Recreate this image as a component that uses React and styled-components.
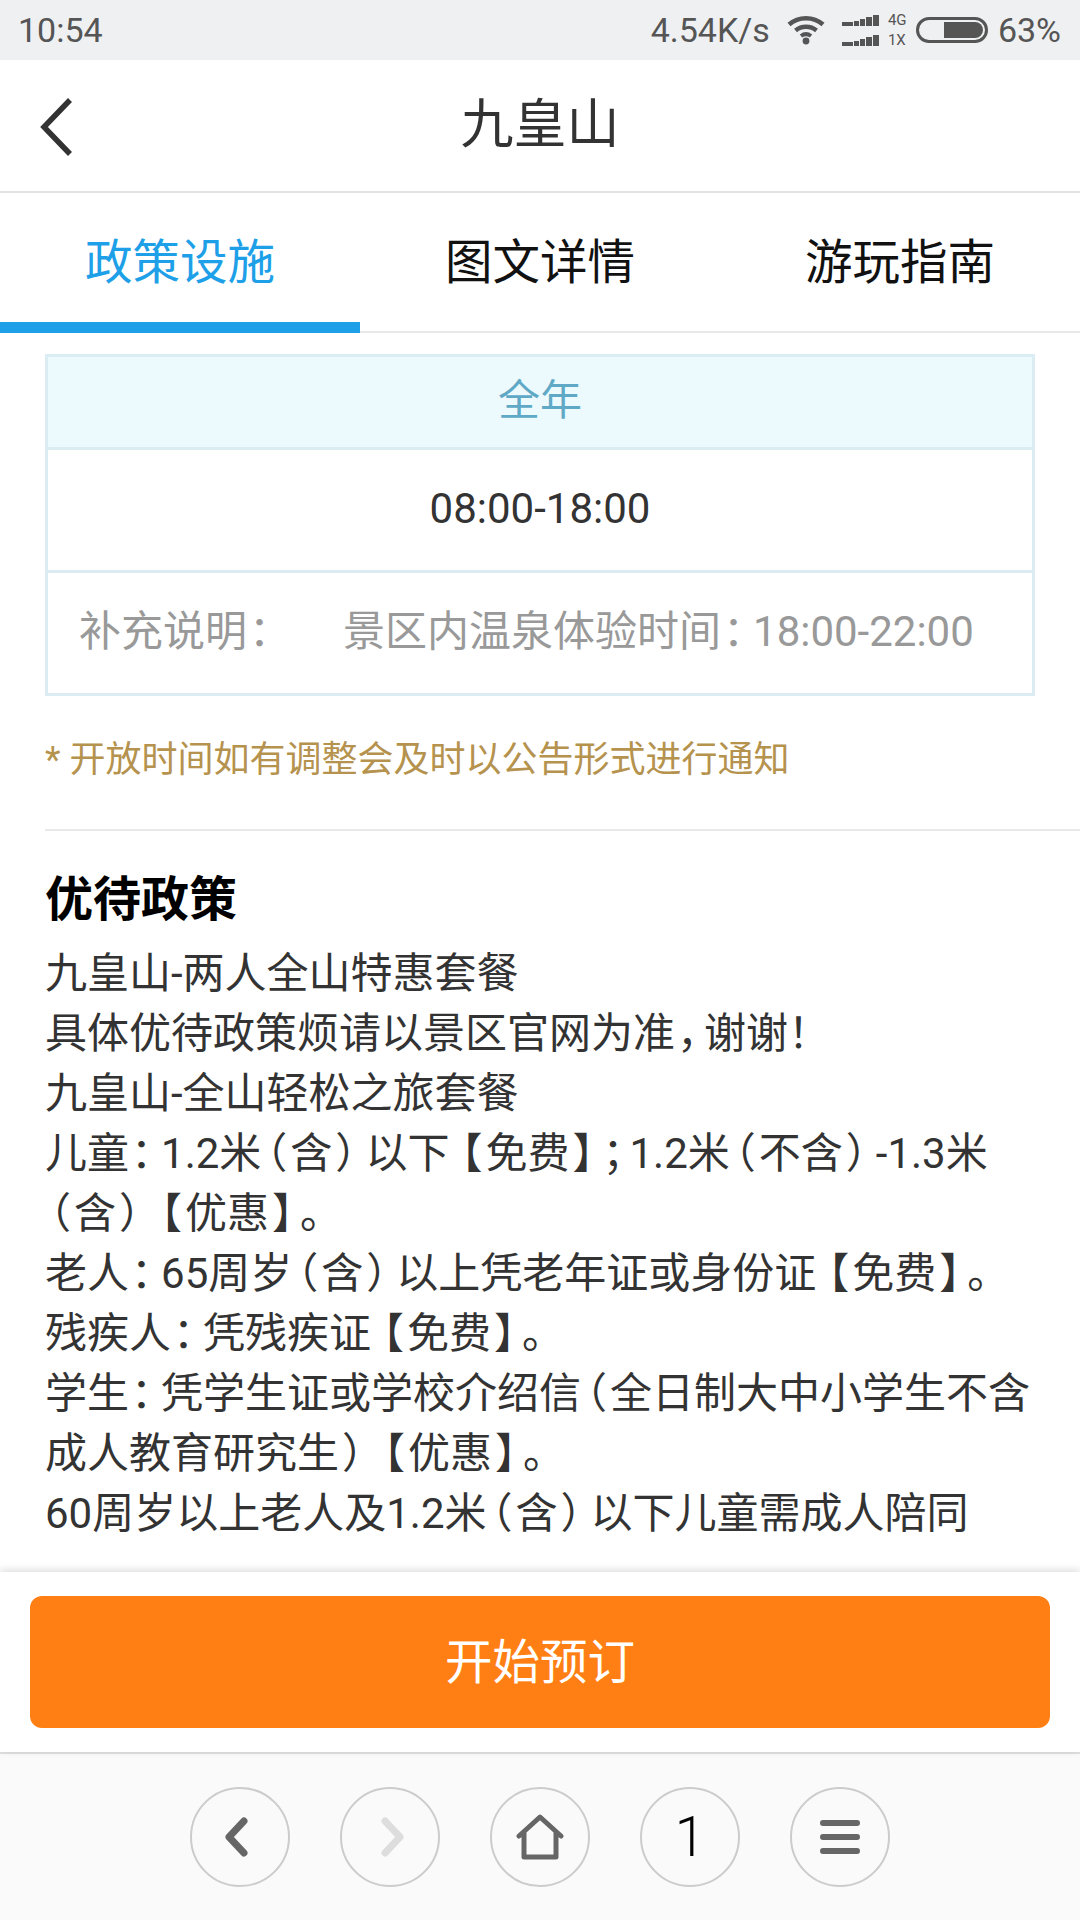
import styled, { createGlobalStyle } from 'styled-components';

const GlobalStyle = createGlobalStyle`
   html, body {
      margin: 0;
      padding: 0;
      background: #fff;
   }
   body {
      font-family: Roboto, "Noto Sans CJK SC", sans-serif;
   }
`;

const policyLines = [
   '九皇山-两人全山特惠套餐',
   '具体优待政策烦请以景区官网为准，谢谢！',
   '九皇山-全山轻松之旅套餐',
   '儿童：1.2米（含）以下【免费】；1.2米（不含）-1.3米',
   '（含）【优惠】。',
   '老人：65周岁（含）以上凭老年证或身份证【免费】。',
   '残疾人：凭残疾证【免费】。',
   '学生：凭学生证或学校介绍信（全日制大中小学生不含',
   '成人教育研究生）【优惠】。',
   '60周岁以上老人及1.2米（含）以下儿童需成人陪同',
];

const tabs = ['政策设施', '图文详情', '游玩指南'];

// the phone font sets its punctuation narrower and centred
const punctPadding = {
   '（': '0 3px 0 5px',
   '）': '0 9px 0 3px',
   '【': '0 3px 0 12px',
   '】': '0 1px 0 3px',
   '：': '0 9px 0 2px',
   '；': '0 6px 0 8px',
   '，': '0 6px 0 2px',
   '！': '0',
   '。': '0 0 0 6px',
};

const withPunct = (text) =>
   text.split(/([（）【】：；，！。])/).map((part, i) =>
      punctPadding[part] ? (
         <Punct key={i} $padding={punctPadding[part]}>
            {part}
         </Punct>
      ) : (
         part
      )
   );

const App = () => {
   return (
      <Page>
         <GlobalStyle />
         <StatusBar>
            <StatusText>10:54</StatusText>
            <StatusRight>
               <Speed>4.54K/s</Speed>
               <svg width='38' height='30' viewBox='0 0 38 30'>
                  <path d='M2 9.5C11.5 1 26.5 1 36 9.5' fill='none' stroke='#555' strokeWidth='4.5' />
                  <path d='M8.5 15.5C14.5 10.5 23.5 10.5 29.5 15.5' fill='none' stroke='#555' strokeWidth='4.5' />
                  <path d='M14 21C17 18.7 21 18.7 24 21' fill='none' stroke='#555' strokeWidth='4' />
                  <circle cx='19' cy='26' r='3.4' fill='#555' />
               </svg>
               <SignalStack>
                  <SignalRow>
                     <SignalBars />
                     <NetLabel>4G</NetLabel>
                  </SignalRow>
                  <SignalRow>
                     <SignalBars />
                     <NetLabel>1X</NetLabel>
                  </SignalRow>
               </SignalStack>
               <Battery>
                  <BatteryLevel />
               </Battery>
               <StatusText>63%</StatusText>
            </StatusRight>
         </StatusBar>

         <Header>
            <BackIcon width='36' height='60' viewBox='0 0 36 60'>
               <path d='M32 3L6 30L32 57' fill='none' stroke='#333' strokeWidth='5.5' />
            </BackIcon>
            <Title>九皇山</Title>
         </Header>

         <Tabs>
            {tabs.map((tab, i) => (
               <Tab key={tab} $active={i === 0}>
                  {tab}
               </Tab>
            ))}
         </Tabs>

         <Content>
            <HoursTable>
               <SeasonRow>全年</SeasonRow>
               <TimeRow>08:00-18:00</TimeRow>
               <NoteRow>
                  <NoteLabel>{withPunct('补充说明：')}</NoteLabel>
                  <span>{withPunct('景区内温泉体验时间：18:00-22:00')}</span>
               </NoteRow>
            </HoursTable>
            <Notice>* 开放时间如有调整会及时以公告形式进行通知</Notice>
            <Divider />
            <SectionTitle>优待政策</SectionTitle>
            {policyLines.map((line) => (
               <PolicyLine key={line}>{withPunct(line)}</PolicyLine>
            ))}
         </Content>

         <BookBar>
            <BookButton>开始预订</BookButton>
         </BookBar>

         <BrowserNav>
            <NavButton>
               <NavChevron width='24' height='40' viewBox='0 0 24 40' $shift='-4px'>
                  <path d='M20 4L5 20L20 36' fill='none' stroke='#666' strokeWidth='7' strokeLinecap='round' strokeLinejoin='round' />
               </NavChevron>
            </NavButton>
            <NavButton>
               <NavChevron width='24' height='40' viewBox='0 0 24 40' $shift='3px'>
                  <path d='M4 4L19 20L4 36' fill='none' stroke='#ddd' strokeWidth='7' strokeLinecap='round' strokeLinejoin='round' />
               </NavChevron>
            </NavButton>
            <NavButton>
               <svg width='48' height='46' viewBox='0 0 48 46'>
                  <path d='M3 22L24 3L45 22M8 19V43H40V19' fill='none' stroke='#666' strokeWidth='5' strokeLinecap='round' strokeLinejoin='round' />
               </svg>
            </NavButton>
            <NavButton>
               <PageCount>1</PageCount>
            </NavButton>
            <NavButton>
               <MenuBars>
                  <i />
                  <i />
                  <i />
               </MenuBars>
            </NavButton>
         </BrowserNav>
      </Page>
   );
};

export default App;

const Page = styled.div`
   width: 1080px;
   height: 1920px;
   display: flex;
   flex-direction: column;
   overflow: hidden;
   background: #fff;
`;

const StatusBar = styled.div`
   height: 60px;
   flex: none;
   display: flex;
   align-items: center;
   justify-content: space-between;
   padding: 0 19px 0 18px;
   background: #eff0f2;
   color: #555;
`;

const StatusText = styled.span`
   font-size: 34px;
   line-height: 60px;
`;

const StatusRight = styled.div`
   display: flex;
   align-items: center;

   svg {
      margin-right: 17px;
   }
`;

const Speed = styled(StatusText)`
   margin-right: 17px;
`;

const SignalStack = styled.div`
   display: flex;
   flex-direction: column;
   gap: 8px;
   margin-right: 6px;
`;

const SignalRow = styled.div`
   display: flex;
   align-items: flex-end;
   height: 12px;
   gap: 9px;
`;

const SignalBars = styled.div`
   width: 37px;
   height: 11px;
   background:
      linear-gradient(#555, #555) 0 100% / 11px 4px no-repeat,
      linear-gradient(#555, #555) 12px 100% / 5px 5px no-repeat,
      linear-gradient(#555, #555) 18px 100% / 5px 7px no-repeat,
      linear-gradient(#555, #555) 24px 100% / 6px 9px no-repeat,
      linear-gradient(#555, #555) 31px 100% / 6px 11px no-repeat;
`;

const NetLabel = styled.span`
   width: 22px;
   font-size: 15px;
   line-height: 12px;
   color: #555;
`;

const Battery = styled.div`
   box-sizing: border-box;
   width: 72px;
   height: 26px;
   margin-right: 10px;
   padding: 2px 2px 2px 25px;
   border: 3px solid #555;
   border-radius: 13px;
`;

const BatteryLevel = styled.div`
   height: 100%;
   background: #555;
   border-radius: 0 8px 8px 0;
`;

const Header = styled.header`
   position: relative;
   box-sizing: border-box;
   height: 133px;
   flex: none;
   display: flex;
   align-items: center;
   justify-content: center;
   border-bottom: 2px solid #e3e3e3;
`;

const BackIcon = styled.svg`
   position: absolute;
   left: 38px;
   top: 37px;
`;

const Title = styled.h1`
   margin: 0 0 12px;
   font-size: 53px;
   font-weight: 400;
   color: #333;
`;

const Tabs = styled.nav`
   box-sizing: border-box;
   height: 140px;
   flex: none;
   display: flex;
   border-bottom: 2px solid #e9e9e9;
`;

const Tab = styled.div`
   box-sizing: border-box;
   width: 360px;
   height: 140px;
   padding-top: 37px;
   text-align: center;
   font-size: 47.5px;
   line-height: 66px;
   color: ${(props) => (props.$active ? '#1ea0e8' : '#111')};
   border-bottom: 11px solid ${(props) => (props.$active ? '#1ea0e8' : 'transparent')};
`;

const Content = styled.main`
   flex: 1;
   min-height: 0;
   overflow: hidden;
   padding: 21px 0 0 45px;
`;

const HoursTable = styled.div`
   box-sizing: border-box;
   width: 990px;
   border: 3px solid #dcecf3;
`;

const SeasonRow = styled.div`
   box-sizing: border-box;
   height: 93px;
   padding-bottom: 12px;
   display: flex;
   align-items: center;
   justify-content: center;
   font-size: 42px;
   color: #5fa9c6;
   background: #ecf9fd;
   border-bottom: 3px solid #dcecf3;
`;

const TimeRow = styled.div`
   box-sizing: border-box;
   height: 123px;
   padding-bottom: 4px;
   display: flex;
   align-items: center;
   justify-content: center;
   font-size: 42px;
   color: #333;
   border-bottom: 3px solid #dcecf3;
`;

const NoteRow = styled.div`
   box-sizing: border-box;
   height: 120px;
   padding: 0 0 12px 31px;
   display: flex;
   align-items: center;
   font-size: 42px;
   color: #999;
   white-space: nowrap;
`;

const NoteLabel = styled.span`
   width: 264px;
   flex: none;
`;

const Punct = styled.span`
   font-feature-settings: 'halt';
   padding: ${(props) => props.$padding};
`;

const Notice = styled.p`
   margin: 38px 0 0;
   font-size: 36px;
   line-height: 52px;
   color: #b5924d;
`;

const Divider = styled.div`
   height: 2px;
   margin-top: 43px;
   background: #e9e9e9;
`;

const SectionTitle = styled.h2`
   margin: 37px 0 12px;
   font-size: 48px;
   line-height: 64px;
   font-weight: 700;
   color: #000;
`;

const PolicyLine = styled.div`
   font-size: 42px;
   line-height: 60px;
   color: #333;
   white-space: nowrap;
`;

const BookBar = styled.div`
   height: 180px;
   flex: none;
   box-sizing: border-box;
   padding: 24px 30px;
   background: #fff;
   box-shadow: 0 -2px 8px rgba(0, 0, 0, 0.14);
   position: relative;
`;

const BookButton = styled.button`
   display: block;
   width: 100%;
   height: 132px;
   padding: 0 0 7px;
   border: 0;
   border-radius: 12px;
   background: #ff7f14;
   color: #fff;
   font-family: inherit;
   font-size: 47.5px;
`;

const BrowserNav = styled.nav`
   box-sizing: border-box;
   height: 168px;
   flex: none;
   display: flex;
   align-items: flex-start;
   justify-content: center;
   gap: 50px;
   padding-top: 33px;
   background: #fafafa;
   border-top: 2px solid #e0e0e0;
`;

const NavButton = styled.div`
   box-sizing: border-box;
   width: 100px;
   height: 100px;
   display: flex;
   align-items: center;
   justify-content: center;
   border: 2px solid #ccc;
   border-radius: 50%;
`;

const NavChevron = styled.svg`
   transform: translateX(${(props) => props.$shift});
`;

const PageCount = styled.span`
   font-size: 55px;
   font-weight: 300;
   line-height: 1;
   color: #000;
`;

const MenuBars = styled.div`
   display: flex;
   flex-direction: column;
   gap: 8px;

   i {
      display: block;
      width: 40px;
      height: 6px;
      border-radius: 3px;
      background: #666;
   }
`;
